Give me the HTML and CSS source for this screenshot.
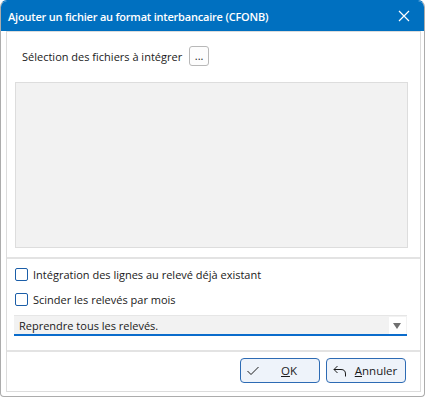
FILE: index.html
```html
<!DOCTYPE html>
<html lang="fr">
<head>
  <meta charset="UTF-8" />
  <meta name="viewport" content="width=device-width, initial-scale=1" />
  <title>Ajouter un fichier au format interbancaire (CFONB)</title>
  <link rel="stylesheet" href="styles.css">
</head>
<body>
  <div class="window">
    <div class="titlebar">
      <span class="title">Ajouter un fichier au format interbancaire (CFONB)</span>
      <svg class="close" width="12" height="12" viewBox="0 0 12 12">
        <path d="M1 1 L11 11 M11 1 L1 11" stroke="#fff" stroke-width="1.2" fill="none" />
      </svg>
    </div>

    <div class="content">
      <div class="panel">
        <!-- fichiers -->
        <section class="files">
          <div class="picker">
            <span class="label">Sélection des fichiers à intégrer</span>
            <button class="browse">...</button>
          </div>
          <div class="filelist"></div>
        </section>

        <!-- options -->
        <section class="options">
          <label class="check"><span class="box"></span>Intégration des lignes au relevé déjà existant</label>
          <label class="check"><span class="box"></span>Scinder les relevés par mois</label>
          <div class="combo">
            <span>Reprendre tous les relevés.</span>
            <span class="arrow"></span>
          </div>
        </section>

        <!-- boutons -->
        <section class="actions">
          <button class="btn">
            <svg width="12" height="10" viewBox="0 0 12 10">
              <path d="M0.5 5 L4 8.5 L11.5 1" stroke="#1a1a1a" stroke-width="1" fill="none" />
            </svg>
            <span class="btn-text"><u>O</u>K</span>
          </button>
          <button class="btn">
            <svg width="14" height="12" viewBox="0 0 14 12">
              <path d="M4.5 1 L1 4.5 L4.5 8 M1 4.5 H8 Q12.5 4.5 12.5 9 V11.5" stroke="#1a1a1a" stroke-width="1" fill="none" />
            </svg>
            <span class="btn-text"><u>A</u>nnuler</span>
          </button>
        </section>
      </div>
    </div>
  </div>
</body>
</html>
```

FILE: styles.css
```css
* { box-sizing: border-box; margin: 0; padding: 0; }

body {
  font-family: 'Open Sans', 'Noto Sans', sans-serif;
  font-size: 11px;
  color: #1a1a1a;
  background: #fff;
}

.window {
  width: 425px;
  height: 397px;
  border: 1px solid #acacac;
  border-top-color: #0070c0;
  border-radius: 7px 7px 4px 4px;
  overflow: hidden;
  background: #fff;
  display: flex;
  flex-direction: column;
}

.titlebar {
  height: 30px;
  flex: none;
  background: #0070c0;
  color: #fff;
  display: flex;
  align-items: center;
  justify-content: space-between;
  padding: 0 14px 0 7px;
}

.title {
  font-weight: 600;
  font-size: 11px;
  letter-spacing: -0.2px;
}

.content {
  flex: 1;
  padding: 0 3px 4px 5px;
  display: flex;
}

.panel {
  flex: 1;
  border: 1px solid #dcdcdc;
  display: flex;
  flex-direction: column;
}

.files {
  padding: 14px 0 9px 8px;
  border-bottom: 2px solid #e3e3e3;
}

.picker {
  display: flex;
  align-items: center;
  gap: 7px;
  padding-left: 7px;
  margin-bottom: 16px;
}

.browse {
  width: 20px;
  height: 20px;
  border: 1px solid #b8b8b8;
  border-radius: 3px;
  background: #fdfdfd;
  font-family: inherit;
  font-size: 11px;
  line-height: 14px;
  color: #1a1a1a;
}

.filelist {
  width: 393px;
  height: 166px;
  background: #f2f2f2;
  border: 1px solid #dddddd;
}

.options {
  padding: 9px 0 14px 8px;
  border-bottom: 2px solid #e3e3e3;
  display: flex;
  flex-direction: column;
  gap: 12px;
}

.check {
  display: flex;
  align-items: center;
  gap: 5px;
  height: 13px;
}

.box {
  width: 13px;
  height: 13px;
  border: 1px solid #1b5ea8;
  border-radius: 2px;
  background: #fff;
}

.combo {
  margin: -3px 0 0 -1px;
  width: 393px;
  height: 21px;
  background: #f2f2f2;
  border-top: 1px solid #e6e6e6;
  border-bottom: 2px solid #0a6ccc;
  display: flex;
  align-items: center;
  justify-content: space-between;
  padding: 0 1px 0 5px;
}

.arrow {
  width: 17px;
  height: 17px;
  background: #fff;
  position: relative;
}

.arrow::after {
  content: "";
  position: absolute;
  left: 4px;
  top: 6px;
  border-left: 4.5px solid transparent;
  border-right: 4.5px solid transparent;
  border-top: 6px solid #707070;
}

.actions {
  flex: 1;
  display: flex;
  justify-content: flex-end;
  align-items: flex-start;
  gap: 6px;
  padding: 6px 14px 0 0;
}

.btn {
  width: 80px;
  height: 25px;
  border: 1px solid #2d6bb4;
  border-radius: 4px;
  background: #eef3fa;
  font-family: inherit;
  font-size: 11.5px;
  color: #1a1a1a;
  display: flex;
  align-items: center;
  padding-left: 6px;
}

.btn svg { flex: none; }

.btn-text {
  flex: 1;
  text-align: center;
}
```
